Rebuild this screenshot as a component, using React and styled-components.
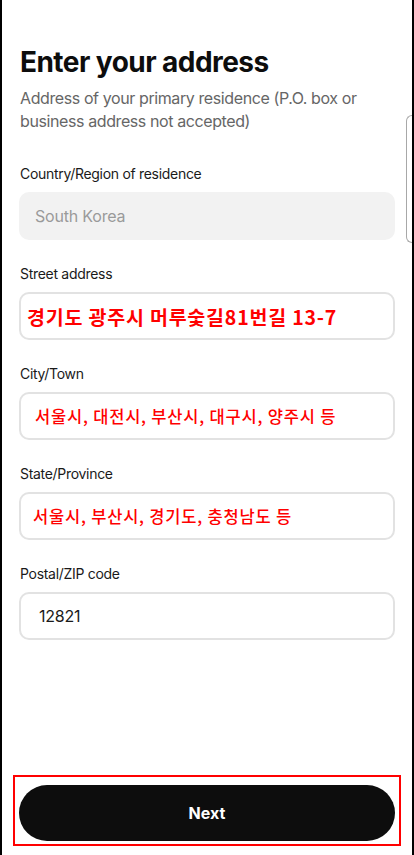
import React from 'react';
import styled, { createGlobalStyle } from 'styled-components';

const GlobalStyle = createGlobalStyle`
    * {
        box-sizing: border-box;
    }
    body {
        margin: 0;
        background: #ffffff;
        font-family: Inter, "Noto Sans CJK KR", sans-serif;
    }
`;

const StyledPage = styled.div`
    position: relative;
    display: flex;
    flex-direction: column;
    width: 414px;
    height: 855px;
    padding: 0 17px;
    border-left: 2px solid #000000;
    border-right: 2px solid #000000;
    background-color: #ffffff;
    overflow: hidden;
`;

const StyledTitle = styled.h1`
    margin: 44px 0 0 1px;
    font-size: 28px;
    line-height: 36px;
    font-weight: 700;
    color: #0d0d0d;
    letter-spacing: -0.55px;
`;

const StyledSubtitle = styled.p`
    margin: 7px 0 0 1px;
    font-size: 16px;
    line-height: 23px;
    color: #666666;
    letter-spacing: -0.4px;
`;

const StyledForm = styled.div`
    display: flex;
    flex-direction: column;
    gap: 24px;
    margin-top: 31px;
`;

const StyledGroup = styled.div`
    display: flex;
    flex-direction: column;
    gap: 8px;
`;

const StyledLabel = styled.label`
    margin-left: 1px;
    font-size: 14px;
    line-height: 20px;
    color: #1a1a1a;
    letter-spacing: -0.3px;
`;

const StyledInput = styled.input`
    width: 100%;
    height: 48px;
    padding: 0 0 0 ${props => props.$pad}px;
    border: ${props => (props.disabled ? "none" : "2px solid #e2e2e2")};
    border-radius: 10px;
    background-color: ${props => (props.disabled ? "#f2f2f2" : "#ffffff")};
    font-family: ${props => (props.$korean ? '"Noto Sans CJK KR", sans-serif' : 'Inter, sans-serif')};
    font-size: ${props => props.$size || 16}px;
    font-weight: ${props => props.$weight || 400};
    letter-spacing: ${props => (props.$korean ? "0.8px" : "-0.2px")};
    color: ${props => (props.disabled ? "#9a9a9a" : props.$korean ? "#ff0000" : "#1a1a1a")};
    outline: none;
    -webkit-text-fill-color: currentColor;
    opacity: 1;
`;

const StyledSpacer = styled.div`
    flex: 1;
`;

const StyledFooter = styled.div`
    margin: 0 -6px 9px;
    padding: 8px 4px 3px;
    border: 2px solid #ff0000;
`;

const StyledButton = styled.button`
    display: flex;
    justify-content: center;
    align-items: center;
    width: 100%;
    height: 56px;
    border: none;
    border-radius: 28px;
    background-color: #0d0d0d;
    color: #ffffff;
    font-family: Inter, sans-serif;
    font-size: 16px;
    font-weight: 700;
    cursor: pointer;
`;

const StyledSideTab = styled.div`
    position: absolute;
    top: 115px;
    right: 0;
    width: 6px;
    height: 128px;
    border: 1px solid #a8a8a8;
    border-right: none;
    border-radius: 6px 0 0 6px;
    background-color: #ffffff;
`;

const fields = [
    { label: "Country/Region of residence", value: "South Korea", disabled: true, pad: 16 },
    { label: "Street address", value: "경기도 광주시 머루숯길81번길 13-7", korean: true, size: 19.5, weight: 700, pad: 6 },
    { label: "City/Town", value: "서울시, 대전시, 부산시, 대구시, 양주시 등", korean: true, size: 16.5, weight: 500, pad: 14 },
    { label: "State/Province", value: "서울시, 부산시, 경기도, 충청남도 등", korean: true, size: 16.5, weight: 500, pad: 12 },
    { label: "Postal/ZIP code", value: "12821", pad: 18 },
];

const App = () => {
    return (
        <>
            <GlobalStyle />
            <StyledPage>
                <StyledTitle>Enter your address</StyledTitle>
                <StyledSubtitle>Address of your primary residence (P.O. box or business address not accepted)</StyledSubtitle>
                <StyledForm>
                    {fields.map(f => (
                        <StyledGroup key={f.label}>
                            <StyledLabel>{f.label}</StyledLabel>
                            <StyledInput
                                readOnly
                                disabled={f.disabled}
                                defaultValue={f.value}
                                $korean={f.korean}
                                $size={f.size}
                                $weight={f.weight}
                                $pad={f.pad}
                            />
                        </StyledGroup>
                    ))}
                </StyledForm>
                <StyledSpacer />
                <StyledFooter>
                    <StyledButton>Next</StyledButton>
                </StyledFooter>
                <StyledSideTab />
            </StyledPage>
        </>
    );
};

export default App;
